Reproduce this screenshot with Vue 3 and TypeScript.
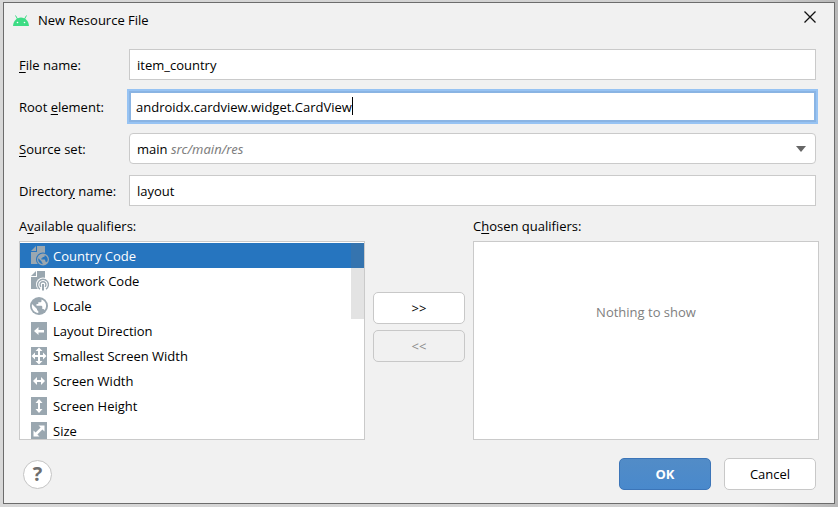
<script setup lang="ts">
import { computed, onMounted, ref, watch } from 'vue'

interface Qualifier {
  name: string
  icon: string
}

const fileName = ref('item_country')
const rootElement = ref('androidx.cardview.widget.CardView')
const sourceSet = ref('main')
const directoryName = ref('layout')

const qualifiers: Qualifier[] = [
  { name: 'Country Code', icon: 'country' },
  { name: 'Network Code', icon: 'network' },
  { name: 'Locale', icon: 'locale' },
  { name: 'Layout Direction', icon: 'direction' },
  { name: 'Smallest Screen Width', icon: 'smallest' },
  { name: 'Screen Width', icon: 'width' },
  { name: 'Screen Height', icon: 'height' },
  { name: 'Size', icon: 'size' },
]

const arrows: Record<string, string> = {
  direction: 'M5 10 L9.500 6 V9 H15 V11.500 H9.500 V14 Z',
  smallest:
    'M10 1.500 L13.500 5 H11 V9 H14 V6.500 L17.500 10 L14 13.500 V11 H11 V15 H13.500 L10 18.500 L6.500 15 H9 V11 H6 V13.500 L2.500 10 L6 6.500 V9 H9 V5 H6.500 Z',
  width: 'M4 10 L8 6 V9 H12 V6 L16 10 L12 14 V11 H8 V14 Z',
  height: 'M10 3 L13.500 7 H11 V13 H13.500 L10 17 L6.500 13 H9 V7 H6.500 Z',
  size: 'M9.500 4.500 H15.500 V10.500 L13.400 8.400 L8.400 13.400 L10.500 15.500 H4.500 V9.500 L6.600 11.600 L11.600 6.600 Z',
}

const selected = ref(0)

const rootInput = ref<HTMLInputElement | null>(null)
const rootTextWidth = ref(0)
const caretStyle = computed(() => ({ left: `${rootTextWidth.value}px` }))

function measureRoot() {
  const input = rootInput.value
  const context = document.createElement('canvas').getContext('2d')
  if (!input || !context) return
  const style = getComputedStyle(input)
  context.font = `${style.fontSize} ${style.fontFamily}`
  rootTextWidth.value =
    Math.round(context.measureText(rootElement.value).width) + parseInt(style.paddingLeft) + parseInt(style.borderLeftWidth)
}

onMounted(measureRoot)
watch(rootElement, measureRoot)
</script>

<template>
  <div class="desktop">
    <main class="dialog">
      <header class="titlebar">
        <svg class="logo" viewBox="0 0 16 11" aria-hidden="true">
          <path d="M2.500 .5 L4.500 4 M13.500 .5 L11.500 4" stroke="#3ddc84" stroke-width="1" />
          <path d="M0 11 C.4 6 3.600 2.500 8 2.500 S15.600 6 16 11 Z" fill="#3ddc84" />
          <circle cx="4.500" cy="7.500" r=".8" fill="#fff" />
          <circle cx="11.500" cy="7.500" r=".8" fill="#fff" />
        </svg>
        <h1>New Resource File</h1>
        <button class="close" type="button" aria-label="Close">
          <svg viewBox="0 0 12 12"><path d="M.5 .5 L11.500 11.500 M11.500 .5 L.5 11.500" stroke="#111" stroke-width="1.300" /></svg>
        </button>
      </header>

      <form class="content" @submit.prevent>
        <div class="fields">
          <label for="file-name"><u>F</u>ile name:</label>
          <input id="file-name" v-model="fileName" class="box" type="text" />

          <label for="root-element">Root <u>e</u>lement:</label>
          <div class="stack">
            <input id="root-element" ref="rootInput" v-model="rootElement" class="box focused" type="text" />
            <span class="caret" :style="caretStyle"></span>
          </div>

          <label for="source-set"><u>S</u>ource set:</label>
          <div class="combo">
            <select id="source-set" v-model="sourceSet" class="box">
              <option value="main">main</option>
            </select>
            <span class="hint">src/main/res</span>
            <svg class="chevron" viewBox="0 0 10 6" aria-hidden="true"><path d="M0 0 H10 L5 6 Z" fill="#666" /></svg>
          </div>

          <label for="directory-name">Director<u>y</u> name:</label>
          <input id="directory-name" v-model="directoryName" class="box" type="text" />
        </div>

        <div class="qualifiers">
          <section class="pane">
            <h2 id="available-title">A<u>v</u>ailable qualifiers:</h2>
            <div class="frame">
              <ul class="list" role="listbox" tabindex="0" aria-labelledby="available-title">
                <li
                  v-for="(item, index) in qualifiers"
                  :key="item.name"
                  class="row"
                  :class="{ selected: index === selected }"
                  role="option"
                  :aria-selected="index === selected"
                  @click="selected = index"
                >
                  <svg class="icon" viewBox="0 0 20 20" aria-hidden="true">
                    <template v-if="item.icon === 'country' || item.icon === 'network'">
                      <mask :id="`cut-${item.icon}`">
                        <rect width="20" height="20" fill="#fff" />
                        <circle cx="14" cy="13.500" r="7" fill="#000" />
                      </mask>
                      <g :mask="`url(#cut-${item.icon})`">
                        <path d="M8 0 H16 V18 H2 V6 H8 Z" fill="#9aa7b0" />
                        <path d="M7 0 V5 H2 Z" fill="#9aa7b0" />
                      </g>
                    </template>
                    <template v-if="item.icon === 'country'">
                      <path
                        fill="#9aa7b0"
                        fill-rule="evenodd"
                        d="M14 7.500 A6 6 0 1 1 14 19.500 A6 6 0 1 1 14 7.500 Z M9.400 12.300 L12.600 15.500 V16.200 L13.500 17 V18.200 C10.500 17.800 8.600 15.200 9.400 12.300 Z M15.700 9.200 C18.700 10.300 19.600 13.700 17.800 16.300 C17.600 15.800 17.200 15.500 16.700 15.500 H16.200 V13.900 L15.700 13.400 H12.400 V12.200 H13.500 V11 H14.700 C15.300 11 15.700 10.600 15.700 10.100 Z"
                      />
                    </template>
                    <template v-if="item.icon === 'network'">
                      <g fill="none" stroke="#9aa7b0" stroke-width="1.400">
                        <path d="M11 18.200 A5.400 5.400 0 1 1 17 18.200" />
                        <path d="M12 15.700 A2.900 2.900 0 1 1 16 15.700" />
                        <path d="M14 13 V19.500" stroke-width="2" />
                      </g>
                    </template>
                    <template v-if="item.icon === 'locale'">
                      <circle cx="10" cy="10" r="9" fill="#9aa7b0" />
                      <path
                        d="M3 8 L8 13 V14 L9.300 15.300 V17 C5 16.700 2 12.500 3 8 Z M12.500 3.500 C17 5 18.500 10 15.700 14.200 C15.400 13.400 14.800 13 14 13 H13.300 V10.500 L12.500 9.800 H7.500 V8 H9.300 V6.300 H11 C12 6.300 12.500 5.700 12.500 5 Z"
                        fill="#fff"
                      />
                    </template>
                    <template v-if="arrows[item.icon]">
                      <rect x="2" y="1" width="16" height="18" fill="#9aa7b0" />
                      <path :d="arrows[item.icon]" fill="#fff" />
                    </template>
                  </svg>
                  <span>{{ item.name }}</span>
                </li>
              </ul>
              <span class="thumb"></span>
            </div>
          </section>

          <div class="transfer">
            <button class="button" type="button" aria-label="Add qualifier">&gt;&gt;</button>
            <button class="button" type="button" aria-label="Remove qualifier" disabled>&lt;&lt;</button>
          </div>

          <section class="pane">
            <h2>C<u>h</u>osen qualifiers:</h2>
            <div class="frame empty"><p>Nothing to show</p></div>
          </section>
        </div>

        <footer class="actions">
          <button class="help" type="button" aria-label="Help">?</button>
          <button class="button primary" type="submit">OK</button>
          <button class="button" type="button">Cancel</button>
        </footer>
      </form>
    </main>
  </div>
</template>

<style>
body {
  background: #cfcfcf;
}
</style>

<style scoped>
* {
  box-sizing: border-box;
}

.desktop {
  display: flex;
  min-height: 100vh;
  padding: 2px 3px 3px;
  background: linear-gradient(90deg, #d8d8d8, #d0d0d0 90%, #b8b8b8);
  color: #000;
  font: 13px/18px 'Open Sans', 'Noto Sans', sans-serif;
}

.dialog {
  flex: 1;
  display: flex;
  flex-direction: column;
  border: 1px solid #6c6c6c;
  background: #f1f1f1;
}

input,
select,
button {
  color: inherit;
  font: inherit;
}

h1,
h2,
p,
ul {
  margin: 0;
  padding: 0;
  font: inherit;
}

u {
  text-underline-offset: 2px;
}

.titlebar {
  display: flex;
  align-items: center;
  gap: 9px;
  height: 34px;
  padding: 0 18px 0 9px;
}

.logo {
  width: 16px;
  height: 11px;
}

.close {
  display: flex;
  margin: 0 0 6px auto;
  padding: 0;
  border: 0;
  background: none;
}

.close svg {
  width: 12px;
  height: 12px;
}

.content {
  flex: 1;
  display: flex;
  flex-direction: column;
  padding: 12px 15px;
}

.fields {
  display: grid;
  grid-template-columns: 98px 1fr;
  align-items: center;
  gap: 11px 12px;
  padding-right: 3px;
}

.box {
  width: 100%;
  height: 31px;
  padding: 0 7px;
  border: 1px solid #cacaca;
  border-radius: 0;
  outline: 0;
  background: #fff;
}

.stack {
  position: relative;
  display: flex;
}

.focused {
  padding: 0 5px;
  border: 2px solid #8ab4e3;
  box-shadow: 0 0 0 2px #97c3f3;
  caret-color: transparent;
}

.caret {
  position: absolute;
  top: 6px;
  width: 1px;
  height: 18px;
  background: #000;
}

.combo {
  display: grid;
  align-items: center;
}

.combo > * {
  grid-area: 1 / 1;
}

.combo .box {
  appearance: none;
  border-radius: 4px;
}

.hint {
  margin-left: 42px;
  color: #808080;
  font-family: 'Noto Sans', sans-serif;
  font-style: italic;
  pointer-events: none;
}

.chevron {
  justify-self: end;
  width: 10px;
  height: 6px;
  margin-right: 10px;
  pointer-events: none;
}

.qualifiers {
  display: grid;
  grid-template-columns: 1fr 92px 1fr;
  gap: 8px;
  margin-top: 11px;
}

.pane {
  display: flex;
  flex-direction: column;
  gap: 6px;
}

.frame {
  position: relative;
  height: 199px;
  border: 1px solid #cacaca;
  background: #fff;
}

.list {
  height: 100%;
  padding-top: 1px;
  overflow-y: auto;
  scrollbar-width: none;
  list-style: none;
  outline: 0;
}

.row {
  display: flex;
  align-items: center;
  gap: 4px;
  height: 25px;
  padding-left: 9px;
}

.icon {
  width: 20px;
  height: 20px;
}

.selected {
  background: #2675bf;
  color: #fff;
}

.thumb {
  position: absolute;
  top: 1px;
  right: 0;
  width: 13px;
  height: 76px;
  background: rgba(115, 115, 115, 0.2);
}

.transfer {
  display: flex;
  flex-direction: column;
  justify-content: center;
  gap: 6px;
  padding-bottom: 4px;
}

.empty {
  padding-top: 61px;
  color: #808080;
  text-align: center;
}

.button {
  width: 92px;
  height: 32px;
  padding: 0;
  border: 1px solid #c8c8c8;
  border-radius: 5px;
  background: #fff;
}

.button:disabled {
  background: #f1f1f1;
  color: #8c8c8c;
}

.primary {
  border-color: #3c75b8;
  background: linear-gradient(#528cc7, #4989cc);
  color: #fff;
  font-weight: 700;
}

.actions {
  display: flex;
  align-items: center;
  gap: 13px;
  margin-top: 18px;
  padding: 0 3px 0 4px;
}

.help {
  width: 29px;
  height: 29px;
  margin-right: auto;
  padding: 0;
  border: 1px solid #c4c4c4;
  border-radius: 50%;
  background: #fff;
  color: #6e6e6e;
  font-size: 20px;
  font-weight: 700;
  line-height: 24px;
}
</style>
